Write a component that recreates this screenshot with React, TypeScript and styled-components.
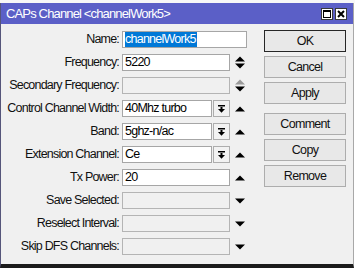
import React from "react";
import styled, { createGlobalStyle } from "styled-components";

const Global = createGlobalStyle`
  html, body { margin: 0; padding: 0; background: #fff; }
  body { font-family: "Liberation Sans", Arial, sans-serif; font-size: 12.5px; }
`;

const Page = styled.div`
  width: 355px;
  height: 268px;
  display: flex;
  flex-direction: column;
  background: #fff;
  overflow: hidden;
`;

const TopStrip = styled.div`
  height: 3px;
  flex: none;
  background: #f7f7f7;
`;

const Window = styled.div`
  width: 354px;
  flex: 1;
  display: flex;
  flex-direction: column;
  box-sizing: border-box;
  border-left: 1px solid #55557a;
  border-right: 1px solid #a8a8a8;
  border-bottom: 4px solid #1b1b1b;
`;

const TitleBar = styled.div`
  height: 21px;
  flex: none;
  display: flex;
  align-items: center;
  padding: 0 6px 0 5px;
  background: #5b5fc7;
`;

const TitleText = styled.span`
  color: #fff;
  font-size: 13px;
  letter-spacing: -0.85px;
  white-space: nowrap;
`;

const TitleButtons = styled.div`
  margin-left: auto;
  display: flex;
  gap: 2px;
`;

const TitleBtn = styled.div`
  width: 12px;
  height: 12px;
  box-sizing: border-box;
  background: #fff;
  border: 1px solid #3a3a3a;
  display: flex;
  align-items: center;
  justify-content: center;
`;

const Body = styled.div`
  flex: 1;
  display: flex;
  background: #f0f0f0;
`;

const Form = styled.div`
  display: flex;
  flex-direction: column;
  gap: 6px;
  padding-top: 7px;
`;

const Row = styled.div`
  display: flex;
  align-items: center;
  height: 17px;
`;

const Label = styled.div`
  width: 118px;
  margin-right: 3px;
  text-align: right;
  white-space: nowrap;
  color: #111;
  letter-spacing: -0.8px;
  line-height: 17px;
`;

const Field = styled.div<{ $w: number; $empty?: boolean }>`
  width: ${(p) => p.$w}px;
  height: 17px;
  box-sizing: border-box;
  border: 1px solid ${(p) => (p.$empty ? "#b4b4b4" : "#a6a6a6")};
  background: ${(p) => (p.$empty ? "#f0f0f0" : "#fff")};
  padding-left: 2px;
  line-height: 15px;
  color: #000;
  letter-spacing: -0.75px;
  white-space: nowrap;
  overflow: hidden;
  flex: none;
`;

const Selected = styled.span`
  background: #0078d7;
  color: #fff;
  padding: 0 1px 1px 0;
`;

const Combo = styled.div`
  display: flex;
  gap: 1px;
  width: 108px;
  flex: none;
`;

const DropBtn = styled.div`
  width: 17px;
  height: 17px;
  box-sizing: border-box;
  border: 1px solid #adadad;
  background: #f2f2f2;
  display: flex;
  align-items: center;
  justify-content: center;
  flex: none;
`;

const IconCell = styled.div`
  width: 10px;
  margin-left: 5px;
  display: flex;
  flex-direction: column;
  align-items: center;
  gap: 1px;
`;

const ButtonCol = styled.div`
  margin-left: auto;
  margin-right: 7px;
  width: 82px;
  padding-top: 6px;
  display: flex;
  flex-direction: column;
  gap: 4px;
`;

const Btn = styled.div<{ $default?: boolean; $sep?: boolean }>`
  height: 22px;
  box-sizing: border-box;
  border: 1px solid ${(p) => (p.$default ? "#262626" : "#adadad")};
  background: #e8e8e8;
  display: flex;
  align-items: center;
  justify-content: center;
  color: #111;
  letter-spacing: -0.7px;
  margin-top: ${(p) => (p.$sep ? 5 : 0)}px;
`;

const Up = ({ color = "#000" }: { color?: string }) => (
  <svg width="10" height="6" viewBox="0 0 10 6">
    <polygon points="0,5.5 10,5.5 5,0.5" fill={color} />
  </svg>
);

const Down = ({ color = "#000" }: { color?: string }) => (
  <svg width="10" height="6" viewBox="0 0 10 6">
    <polygon points="0,0.5 10,0.5 5,5.5" fill={color} />
  </svg>
);

const DropIcon = () => (
  <svg width="7" height="8" viewBox="0 0 7 8">
    <rect x="0" y="0" width="7" height="1.5" fill="#000" />
    <rect x="2.5" y="2" width="2" height="2.5" fill="#000" />
    <polygon points="0,4 7,4 3.5,7.8" fill="#000" />
  </svg>
);

const MaxIcon = () => (
  <svg width="8" height="8" viewBox="0 0 8 8">
    <rect x="0.5" y="0.5" width="7" height="7" fill="none" stroke="#000" strokeWidth="1" />
    <rect x="0" y="0" width="8" height="2" fill="#000" />
  </svg>
);

const CloseIcon = () => (
  <svg width="8" height="8" viewBox="0 0 8 8">
    <path d="M1 1 L7 7 M7 1 L1 7" stroke="#000" strokeWidth="2" />
  </svg>
);

type Kind = "spin" | "spinOff" | "up" | "down" | "none";

const Icon = ({ kind }: { kind: Kind }) => {
  if (kind === "spin")
    return (
      <IconCell>
        <Up />
        <Down />
      </IconCell>
    );
  if (kind === "spinOff")
    return (
      <IconCell>
        <Up color="#9a9a9a" />
        <Down />
      </IconCell>
    );
  if (kind === "up")
    return (
      <IconCell>
        <Up />
      </IconCell>
    );
  if (kind === "down")
    return (
      <IconCell>
        <Down />
      </IconCell>
    );
  return null;
};

const rows: { label: string; value?: string; combo?: boolean; icon: Kind }[] = [
  { label: "Frequency:", value: "5220", icon: "spin" },
  { label: "Secondary Frequency:", icon: "spinOff" },
  { label: "Control Channel Width:", value: "40Mhz turbo", combo: true, icon: "up" },
  { label: "Band:", value: "5ghz-n/ac", combo: true, icon: "up" },
  { label: "Extension Channel:", value: "Ce", combo: true, icon: "up" },
  { label: "Tx Power:", value: "20", icon: "up" },
  { label: "Save Selected:", icon: "down" },
  { label: "Reselect Interval:", icon: "down" },
  { label: "Skip DFS Channels:", icon: "down" },
];

export default function App() {
  return (
    <Page>
      <Global />
      <TopStrip />
      <Window>
        <TitleBar>
          <TitleText>CAPs Channel &lt;channelWork5&gt;</TitleText>
          <TitleButtons>
            <TitleBtn>
              <MaxIcon />
            </TitleBtn>
            <TitleBtn>
              <CloseIcon />
            </TitleBtn>
          </TitleButtons>
        </TitleBar>
        <Body>
          <Form>
            <Row>
              <Label>Name:</Label>
              <Field $w={125}>
                <Selected>channelWork5</Selected>
              </Field>
            </Row>
            {rows.map((r) => (
              <Row key={r.label}>
                <Label>{r.label}</Label>
                {r.combo ? (
                  <Combo>
                    <Field $w={90}>{r.value}</Field>
                    <DropBtn>
                      <DropIcon />
                    </DropBtn>
                  </Combo>
                ) : (
                  <Field $w={108} $empty={r.value === undefined}>
                    {r.value}
                  </Field>
                )}
                <Icon kind={r.icon} />
              </Row>
            ))}
          </Form>
          <ButtonCol>
            <Btn $default>OK</Btn>
            <Btn>Cancel</Btn>
            <Btn>Apply</Btn>
            <Btn $sep>Comment</Btn>
            <Btn>Copy</Btn>
            <Btn>Remove</Btn>
          </ButtonCol>
        </Body>
      </Window>
    </Page>
  );
}
